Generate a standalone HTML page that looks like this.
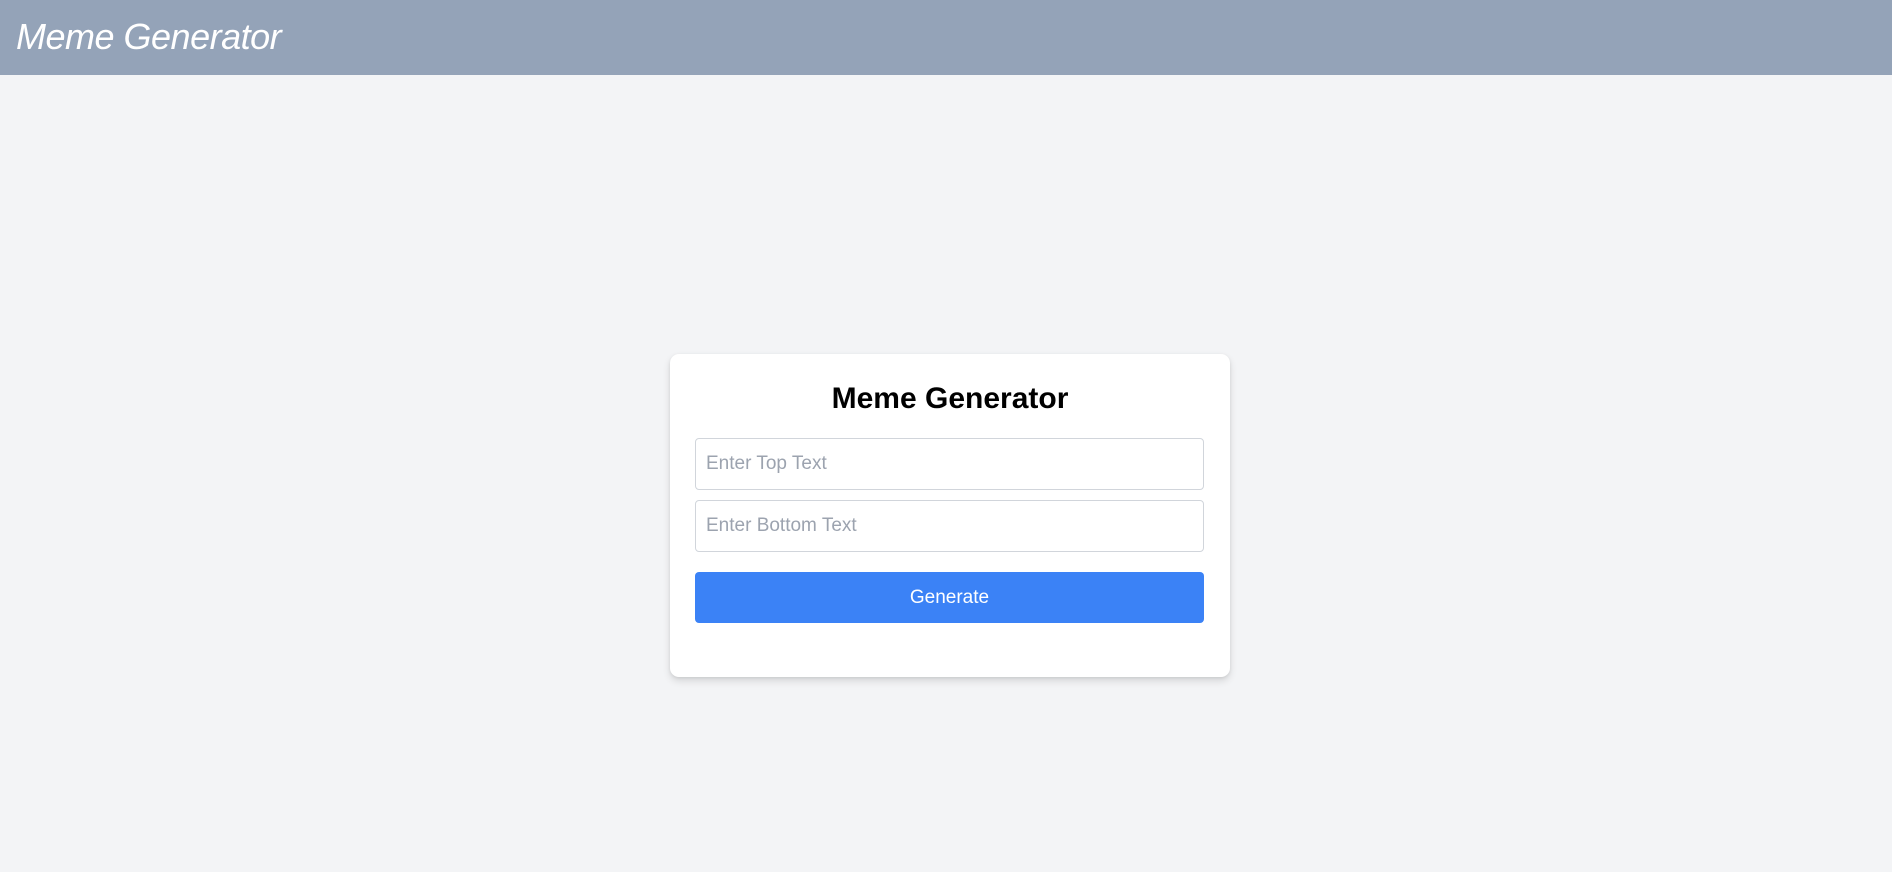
<!DOCTYPE html>
<html><head><meta charset="utf-8"><style>
html,body{margin:0;padding:0;width:1892px;height:872px;overflow:hidden;background:#f3f4f6;font-family:"Liberation Sans",sans-serif}
header{position:absolute;left:0;top:0;width:1892px;height:75px;background:#94a3b8}
header h1{margin:0;position:absolute;left:16px;top:17px;font-size:36px;font-weight:300;font-style:italic;color:#fff;line-height:40px;letter-spacing:-0.5px}
.card{position:absolute;left:670px;top:354px;width:560px;height:323px;background:#fff;border-radius:9px;box-shadow:0 4px 8px rgba(0,0,0,0.12),0 1px 3px rgba(0,0,0,0.08)}
.card h2{margin:0;position:absolute;left:0;width:560px;text-align:center;font-size:30px;font-weight:bold;color:#000;line-height:36px}
.inp{position:absolute;left:25px;width:507px;height:50px;border:1px solid #d1d5db;border-radius:4px}
.inp span{position:absolute;left:10px;top:0;line-height:50px;font-size:19px;color:#9ca3af}
.btn{position:absolute;left:25px;top:218px;width:509px;height:51px;background:#3b82f6;border-radius:4px;color:#fff;font-size:19px;text-align:center;line-height:51px}
</style></head><body>
<header><h1>Meme Generator</h1></header>
<div class="card">
<h2 style="top:27px">Meme Generator</h2>
<div class="inp" style="top:84px"><span>Enter Top Text</span></div>
<div class="inp" style="top:146px"><span>Enter Bottom Text</span></div>
<div class="btn">Generate</div>
</div>
</body></html>
